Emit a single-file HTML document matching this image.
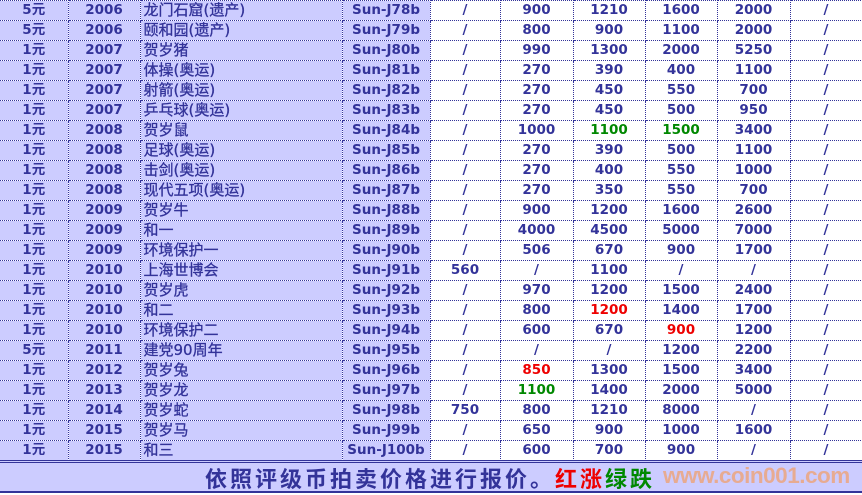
<!DOCTYPE html><html><head><meta charset="utf-8"><style>
body{margin:0;width:862px;height:495px;overflow:hidden;background:#fff;font-family:"DejaVu Sans","Noto Sans CJK SC",sans-serif;}
table{position:absolute;left:0;top:0;border-collapse:collapse;table-layout:fixed;width:862px}
td{height:19px;padding:0;border:1px dotted #333399;color:#333399;font-weight:bold;font-size:13.5px;text-align:center;white-space:nowrap;line-height:19px;overflow:hidden}
td.l{background:#ccccff}
td.n{text-align:left;padding-left:3px;font-weight:normal;font-size:15px;font-family:"DejaVu Sans","Noto Sans CJK SC",sans-serif;-webkit-text-stroke:0.3px #333399}
tr td:first-child{border-left:none}
.r{color:#e00}.g{color:#080}
#ft{position:absolute;left:0;top:460px;width:862px;height:33px;background:#ccccff;border-top:3px double #333399;border-bottom:2px solid #333399;box-sizing:border-box}
#ft .t{position:absolute;left:205px;top:-1px;font-size:22px;color:#333399;font-family:"Noto Sans CJK SC",sans-serif;font-weight:bold;letter-spacing:3px;white-space:nowrap}
#ft .w{position:absolute;left:663px;top:0px;font-size:22.5px;font-weight:bold;color:rgba(240,160,110,0.75);font-family:"Liberation Sans",sans-serif;letter-spacing:-0.5px;white-space:nowrap}
</style></head><body>
<table>
<colgroup><col style="width:68px"><col style="width:72px"><col style="width:202px"><col style="width:88px"><col style="width:70px"><col style="width:73px"><col style="width:72px"><col style="width:72px"><col style="width:73px"><col style="width:72px"></colgroup>
<tr><td class="l">5元</td><td class="l">2006</td><td class="l n">龙门石窟(遗产)</td><td class="l">Sun-J78b</td><td>/</td><td>900</td><td>1210</td><td>1600</td><td>2000</td><td>/</td></tr>
<tr><td class="l">5元</td><td class="l">2006</td><td class="l n">颐和园(遗产)</td><td class="l">Sun-J79b</td><td>/</td><td>800</td><td>900</td><td>1100</td><td>2000</td><td>/</td></tr>
<tr><td class="l">1元</td><td class="l">2007</td><td class="l n">贺岁猪</td><td class="l">Sun-J80b</td><td>/</td><td>990</td><td>1300</td><td>2000</td><td>5250</td><td>/</td></tr>
<tr><td class="l">1元</td><td class="l">2007</td><td class="l n">体操(奥运)</td><td class="l">Sun-J81b</td><td>/</td><td>270</td><td>390</td><td>400</td><td>1100</td><td>/</td></tr>
<tr><td class="l">1元</td><td class="l">2007</td><td class="l n">射箭(奥运)</td><td class="l">Sun-J82b</td><td>/</td><td>270</td><td>450</td><td>550</td><td>700</td><td>/</td></tr>
<tr><td class="l">1元</td><td class="l">2007</td><td class="l n">乒乓球(奥运)</td><td class="l">Sun-J83b</td><td>/</td><td>270</td><td>450</td><td>500</td><td>950</td><td>/</td></tr>
<tr><td class="l">1元</td><td class="l">2008</td><td class="l n">贺岁鼠</td><td class="l">Sun-J84b</td><td>/</td><td>1000</td><td class="g">1100</td><td class="g">1500</td><td>3400</td><td>/</td></tr>
<tr><td class="l">1元</td><td class="l">2008</td><td class="l n">足球(奥运)</td><td class="l">Sun-J85b</td><td>/</td><td>270</td><td>390</td><td>500</td><td>1100</td><td>/</td></tr>
<tr><td class="l">1元</td><td class="l">2008</td><td class="l n">击剑(奥运)</td><td class="l">Sun-J86b</td><td>/</td><td>270</td><td>400</td><td>550</td><td>1000</td><td>/</td></tr>
<tr><td class="l">1元</td><td class="l">2008</td><td class="l n">现代五项(奥运)</td><td class="l">Sun-J87b</td><td>/</td><td>270</td><td>350</td><td>550</td><td>700</td><td>/</td></tr>
<tr><td class="l">1元</td><td class="l">2009</td><td class="l n">贺岁牛</td><td class="l">Sun-J88b</td><td>/</td><td>900</td><td>1200</td><td>1600</td><td>2600</td><td>/</td></tr>
<tr><td class="l">1元</td><td class="l">2009</td><td class="l n">和一</td><td class="l">Sun-J89b</td><td>/</td><td>4000</td><td>4500</td><td>5000</td><td>7000</td><td>/</td></tr>
<tr><td class="l">1元</td><td class="l">2009</td><td class="l n">环境保护一</td><td class="l">Sun-J90b</td><td>/</td><td>506</td><td>670</td><td>900</td><td>1700</td><td>/</td></tr>
<tr><td class="l">1元</td><td class="l">2010</td><td class="l n">上海世博会</td><td class="l">Sun-J91b</td><td>560</td><td>/</td><td>1100</td><td>/</td><td>/</td><td>/</td></tr>
<tr><td class="l">1元</td><td class="l">2010</td><td class="l n">贺岁虎</td><td class="l">Sun-J92b</td><td>/</td><td>970</td><td>1200</td><td>1500</td><td>2400</td><td>/</td></tr>
<tr><td class="l">1元</td><td class="l">2010</td><td class="l n">和二</td><td class="l">Sun-J93b</td><td>/</td><td>800</td><td class="r">1200</td><td>1400</td><td>1700</td><td>/</td></tr>
<tr><td class="l">1元</td><td class="l">2010</td><td class="l n">环境保护二</td><td class="l">Sun-J94b</td><td>/</td><td>600</td><td>670</td><td class="r">900</td><td>1200</td><td>/</td></tr>
<tr><td class="l">5元</td><td class="l">2011</td><td class="l n">建党90周年</td><td class="l">Sun-J95b</td><td>/</td><td>/</td><td>/</td><td>1200</td><td>2200</td><td>/</td></tr>
<tr><td class="l">1元</td><td class="l">2012</td><td class="l n">贺岁兔</td><td class="l">Sun-J96b</td><td>/</td><td class="r">850</td><td>1300</td><td>1500</td><td>3400</td><td>/</td></tr>
<tr><td class="l">1元</td><td class="l">2013</td><td class="l n">贺岁龙</td><td class="l">Sun-J97b</td><td>/</td><td class="g">1100</td><td>1400</td><td>2000</td><td>5000</td><td>/</td></tr>
<tr><td class="l">1元</td><td class="l">2014</td><td class="l n">贺岁蛇</td><td class="l">Sun-J98b</td><td>750</td><td>800</td><td>1210</td><td>8000</td><td>/</td><td>/</td></tr>
<tr><td class="l">1元</td><td class="l">2015</td><td class="l n">贺岁马</td><td class="l">Sun-J99b</td><td>/</td><td>650</td><td>900</td><td>1000</td><td>1600</td><td>/</td></tr>
<tr><td class="l">1元</td><td class="l">2015</td><td class="l n">和三</td><td class="l">Sun-J100b</td><td>/</td><td>600</td><td>700</td><td>900</td><td>/</td><td>/</td></tr>
</table>
<div id="ft"><span class="t">依照评级币拍卖价格进行报价。<span class="r">红涨</span><span class="g">绿跌</span></span><span class="w">www.coin001.com</span></div>
</body></html>
